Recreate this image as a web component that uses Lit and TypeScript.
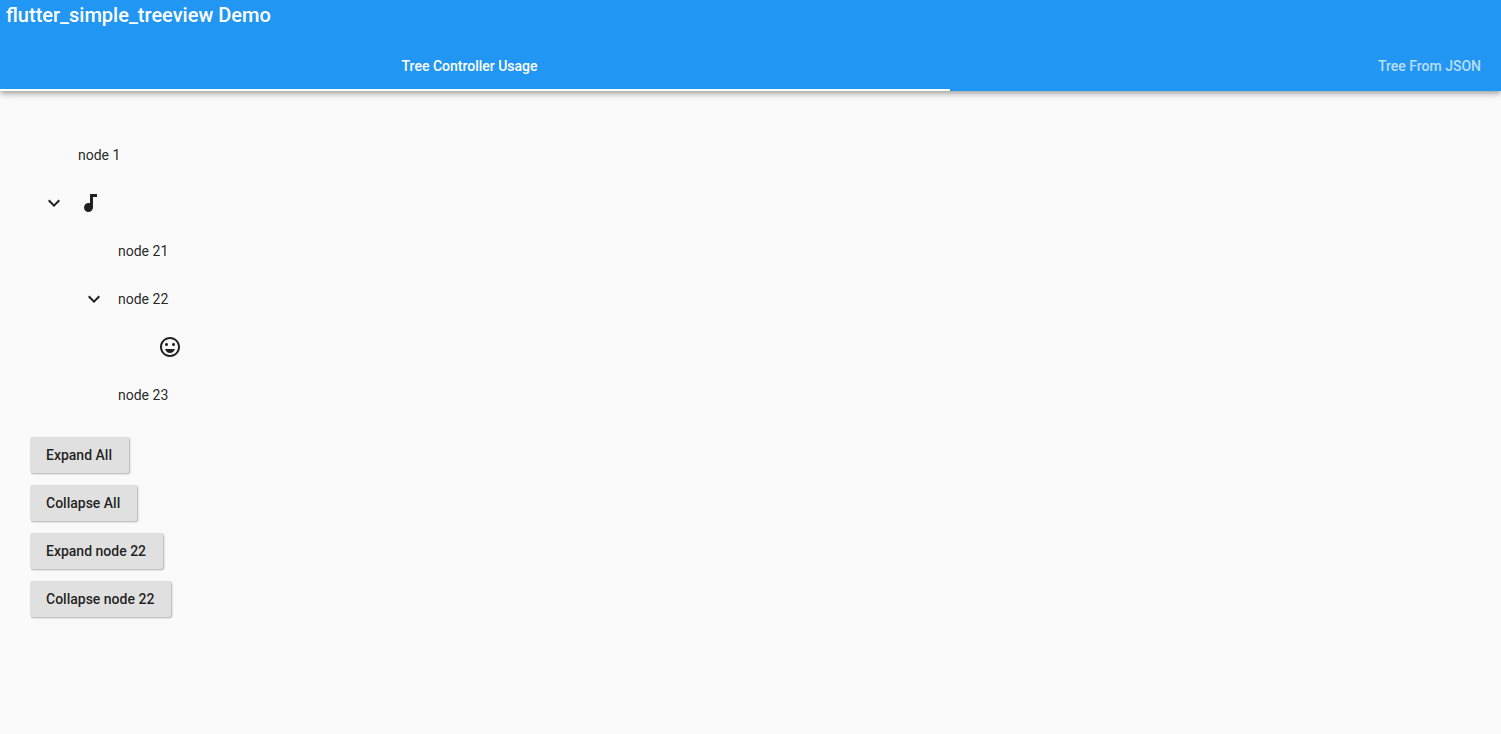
import { LitElement, html, css, svg, nothing, type TemplateResult } from "lit";
import { customElement, state } from "lit/decorators.js";
import { classMap } from "lit/directives/class-map.js";

interface TreeNode {
  key: string;
  label?: string;
  icon?: "note" | "face";
  children?: TreeNode[];
}

const NODES: TreeNode[] = [
  { key: "1", label: "node 1" },
  {
    key: "2",
    icon: "note",
    children: [
      { key: "21", label: "node 21" },
      { key: "22", label: "node 22", children: [{ key: "221", icon: "face" }] },
      { key: "23", label: "node 23" },
    ],
  },
];

const ICONS = {
  note: svg`<path d="M12 3v9.280c-.47-.17-.97-.28-1.500-.28C8.010 12 6 14.010 6 16.500S8.010 21 10.500 21c2.310 0 4.200-1.750 4.450-4H15V6h4V3h-7z"/>`,
  face: svg`<path d="M12 2C6.480 2 2 6.480 2 12s4.480 10 10 10 10-4.480 10-10S17.520 2 12 2zm0 18c-4.420 0-8-3.580-8-8s3.580-8 8-8 8 3.580 8 8-3.580 8-8 8zm3.500-9c.83 0 1.500-.67 1.500-1.500S16.330 8 15.500 8 14 8.670 14 9.500s.67 1.500 1.500 1.500zm-7 0c.83 0 1.500-.67 1.500-1.500S9.330 8 8.500 8 7 8.670 7 9.500 7.670 11 8.500 11zM12 18c2.280 0 4.220-1.660 5-4H7c.78 2.340 2.720 4 5 4z"/>`,
  more: svg`<path d="M16.590 8.590L12 13.170 7.410 8.590 6 10l6 6 6-6z"/>`,
};

@customElement("app-root")
export class AppRoot extends LitElement {
  @state() private collapsed = new Set<string>();

  static styles = css`
    :host {
      display: block;
      min-height: 100vh;
      background: #fafafa;
      color: rgba(0, 0, 0, 0.87);
      font: 400 14px/16px Roboto, sans-serif;
    }
    .bar {
      background: #2196f3;
      color: #fff;
      box-shadow: 0 2px 4px -1px rgba(0, 0, 0, 0.2),
        0 4px 5px rgba(0, 0, 0, 0.14), 0 1px 10px rgba(0, 0, 0, 0.12);
    }
    .title {
      margin: 0;
      padding: 3px 6px 16px;
      font-size: 20px;
      font-weight: 500;
      line-height: 24px;
    }
    .tabs {
      display: flex;
    }
    .tab {
      flex: 1;
      height: 48px;
      border: 0;
      border-bottom: 2px solid transparent;
      padding: 0 20px;
      background: none;
      color: rgba(255, 255, 255, 0.7);
      font: inherit;
      font-weight: 500;
      text-align: right;
      cursor: pointer;
    }
    .tab.selected {
      flex: 0 0 63.3%;
      padding: 0 11px 0 0;
      border-bottom-color: #fff;
      color: #fff;
      text-align: center;
    }
    .content {
      padding: 40px 30px;
    }
    .nodes {
      list-style: none;
      margin: 0;
      padding: 0;
    }
    .nodes .nodes {
      padding-left: 40px;
    }
    .row {
      display: flex;
      align-items: center;
      height: 48px;
    }
    .toggle {
      display: flex;
      align-items: center;
      justify-content: center;
      width: 48px;
      height: 48px;
      border: 0;
      padding: 0;
      background: none;
      color: inherit;
    }
    button.toggle {
      cursor: pointer;
    }
    .icon {
      display: block;
      width: 24px;
      height: 24px;
      fill: #212121;
    }
    .closed .icon {
      transform: rotate(-90deg);
    }
    .actions {
      display: flex;
      flex-direction: column;
      align-items: flex-start;
      gap: 12px;
      padding-top: 18px;
    }
    .action {
      height: 36px;
      border: 0;
      border-radius: 2px;
      padding: 0 17px 0 16px;
      background: #e0e0e0;
      color: rgba(0, 0, 0, 0.87);
      font: inherit;
      font-weight: 500;
      box-shadow: 1px 1px 2px rgba(0, 0, 0, 0.3);
      cursor: pointer;
    }
  `;

  private setCollapsed(key: string, closed: boolean) {
    const next = new Set(this.collapsed);
    closed ? next.add(key) : next.delete(key);
    this.collapsed = next;
  }

  private renderNode(node: TreeNode): TemplateResult {
    const closed = this.collapsed.has(node.key);
    return html`<li>
      <div class="row">
        ${node.children
          ? html`<button
              class=${classMap({ toggle: true, closed })}
              aria-label="Toggle node ${node.key}"
              aria-expanded=${closed ? "false" : "true"}
              @click=${() => this.setCollapsed(node.key, !closed)}
            ><svg class="icon" viewBox="0 0 24 24" aria-hidden="true">${ICONS.more}</svg></button>`
          : html`<span class="toggle"></span>`}
        ${node.icon
          ? html`<svg class="icon" viewBox="0 0 24 24" aria-hidden="true">${ICONS[node.icon]}</svg>`
          : html`<span>${node.label}</span>`}
      </div>
      ${node.children && !closed ? this.renderNodes(node.children) : nothing}
    </li>`;
  }

  private renderNodes(nodes: TreeNode[]): TemplateResult {
    return html`<ul class="nodes">${nodes.map((n) => this.renderNode(n))}</ul>`;
  }

  render() {
    return html`
      <header class="bar">
        <h1 class="title">flutter_simple_treeview Demo</h1>
        <div class="tabs" role="tablist">
          <button class="tab selected" role="tab" aria-selected="true">Tree Controller Usage</button>
          <button class="tab" role="tab" aria-selected="false">Tree From JSON</button>
        </div>
      </header>
      <main class="content">
        ${this.renderNodes(NODES)}
        <div class="actions">
          <button class="action" @click=${() => (this.collapsed = new Set())}>Expand All</button>
          <button class="action" @click=${() => (this.collapsed = new Set(["2", "22"]))}>Collapse All</button>
          <button class="action" @click=${() => this.setCollapsed("22", false)}>Expand node 22</button>
          <button class="action" @click=${() => this.setCollapsed("22", true)}>Collapse node 22</button>
        </div>
      </main>
    `;
  }
}
